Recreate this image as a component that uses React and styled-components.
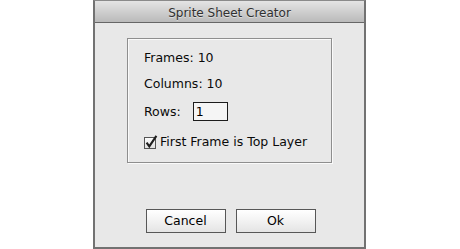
import React from "react";
import styled, { createGlobalStyle } from "styled-components";

const Global = createGlobalStyle`
  html, body { margin: 0; padding: 0; background: #fff; }
  body { font-family: "DejaVu Sans", "Liberation Sans", sans-serif; }
  * { box-sizing: border-box; }
`;

const Window = styled.div`
  width: 273px;
  height: 249px;
  margin-left: 93px;
  background: #e8e8e8;
  border: 2px solid #727272;
  border-top: 1px solid #8a8a8a;
  display: flex;
  flex-direction: column;
`;

const TitleBar = styled.div`
  height: 22px;
  padding-top: 5px;
  border-bottom: 1px solid #666;
  background: linear-gradient(#e4e4e4, #bababa);
  text-align: center;
  font-size: 12px;
  line-height: 14px;
  color: #303030;
  text-shadow: 0 1px 0 rgba(255, 255, 255, 0.45);
`;

const Group = styled.div`
  width: 205px;
  height: 125px;
  margin: 15px 0 0 32px;
  border: 1px solid #8e8e8e;
  box-shadow: inset 1px 1px 0 #fafafa, 1px 1px 0 #fafafa;
  padding: 12px 0 13px 16px;
  display: flex;
  flex-direction: column;
`;

const Field = styled.div`
  display: flex;
  align-items: center;
  gap: ${(p) => p.$gap || 0}px;
  margin-top: ${(p) => p.$top || 0}px;
  font-size: 12.5px;
  line-height: 14px;
  color: #0a0a0a;
`;

const Input = styled.input`
  width: 35px;
  height: 19px;
  border: 1px solid #1c1c1c;
  background: #f5f5f5;
  font-family: inherit;
  font-size: 12.5px;
  line-height: 14px;
  padding: 0 0 0 2px;
  margin: 0;
  color: #000;
  outline: none;
`;

const CheckSvg = styled.svg`
  width: 13px;
  height: 14px;
  overflow: visible;
  flex: none;
`;

const ButtonRow = styled.div`
  display: flex;
  justify-content: center;
  gap: 10px;
  padding-left: 2px;
  margin-top: 46px;
`;

const Button = styled.button`
  width: 80px;
  height: 24px;
  border: 1px solid #575757;
  background: linear-gradient(#ffffff, #f2f2f2 50%, #e4e4e4);
  font-family: inherit;
  font-size: 12.5px;
  line-height: 14px;
  color: #000;
  padding: 0;
  margin: 0;
`;

function Checkbox() {
  return (
    <CheckSvg viewBox="0 0 13 14">
      <defs>
        <linearGradient id="cb" x1="0" y1="0" x2="0" y2="1">
          <stop offset="0" stopColor="#fdfdfd" />
          <stop offset="1" stopColor="#dedede" />
        </linearGradient>
      </defs>
      <rect x="0.5" y="2.5" width="11" height="11" fill="url(#cb)" stroke="#555" />
      <path
        d="M2.6 7.6 L5.3 11.4 L12.4 0.8"
        fill="none"
        stroke="#1e1e1e"
        strokeWidth="2.1"
        strokeLinejoin="miter"
      />
    </CheckSvg>
  );
}

export default function App() {
  return (
    <>
      <Global />
      <Window>
        <TitleBar>Sprite Sheet Creator</TitleBar>
        <Group>
          <Field>Frames: 10</Field>
          <Field $top={12}>Columns: 10</Field>
          <Field $top={11} $gap={12}>
            Rows:
            <Input defaultValue="1" />
          </Field>
          <Field $top={14} $gap={3}>
            <Checkbox />
            First Frame is Top Layer
          </Field>
        </Group>
        <ButtonRow>
          <Button>Cancel</Button>
          <Button>Ok</Button>
        </ButtonRow>
      </Window>
    </>
  );
}
